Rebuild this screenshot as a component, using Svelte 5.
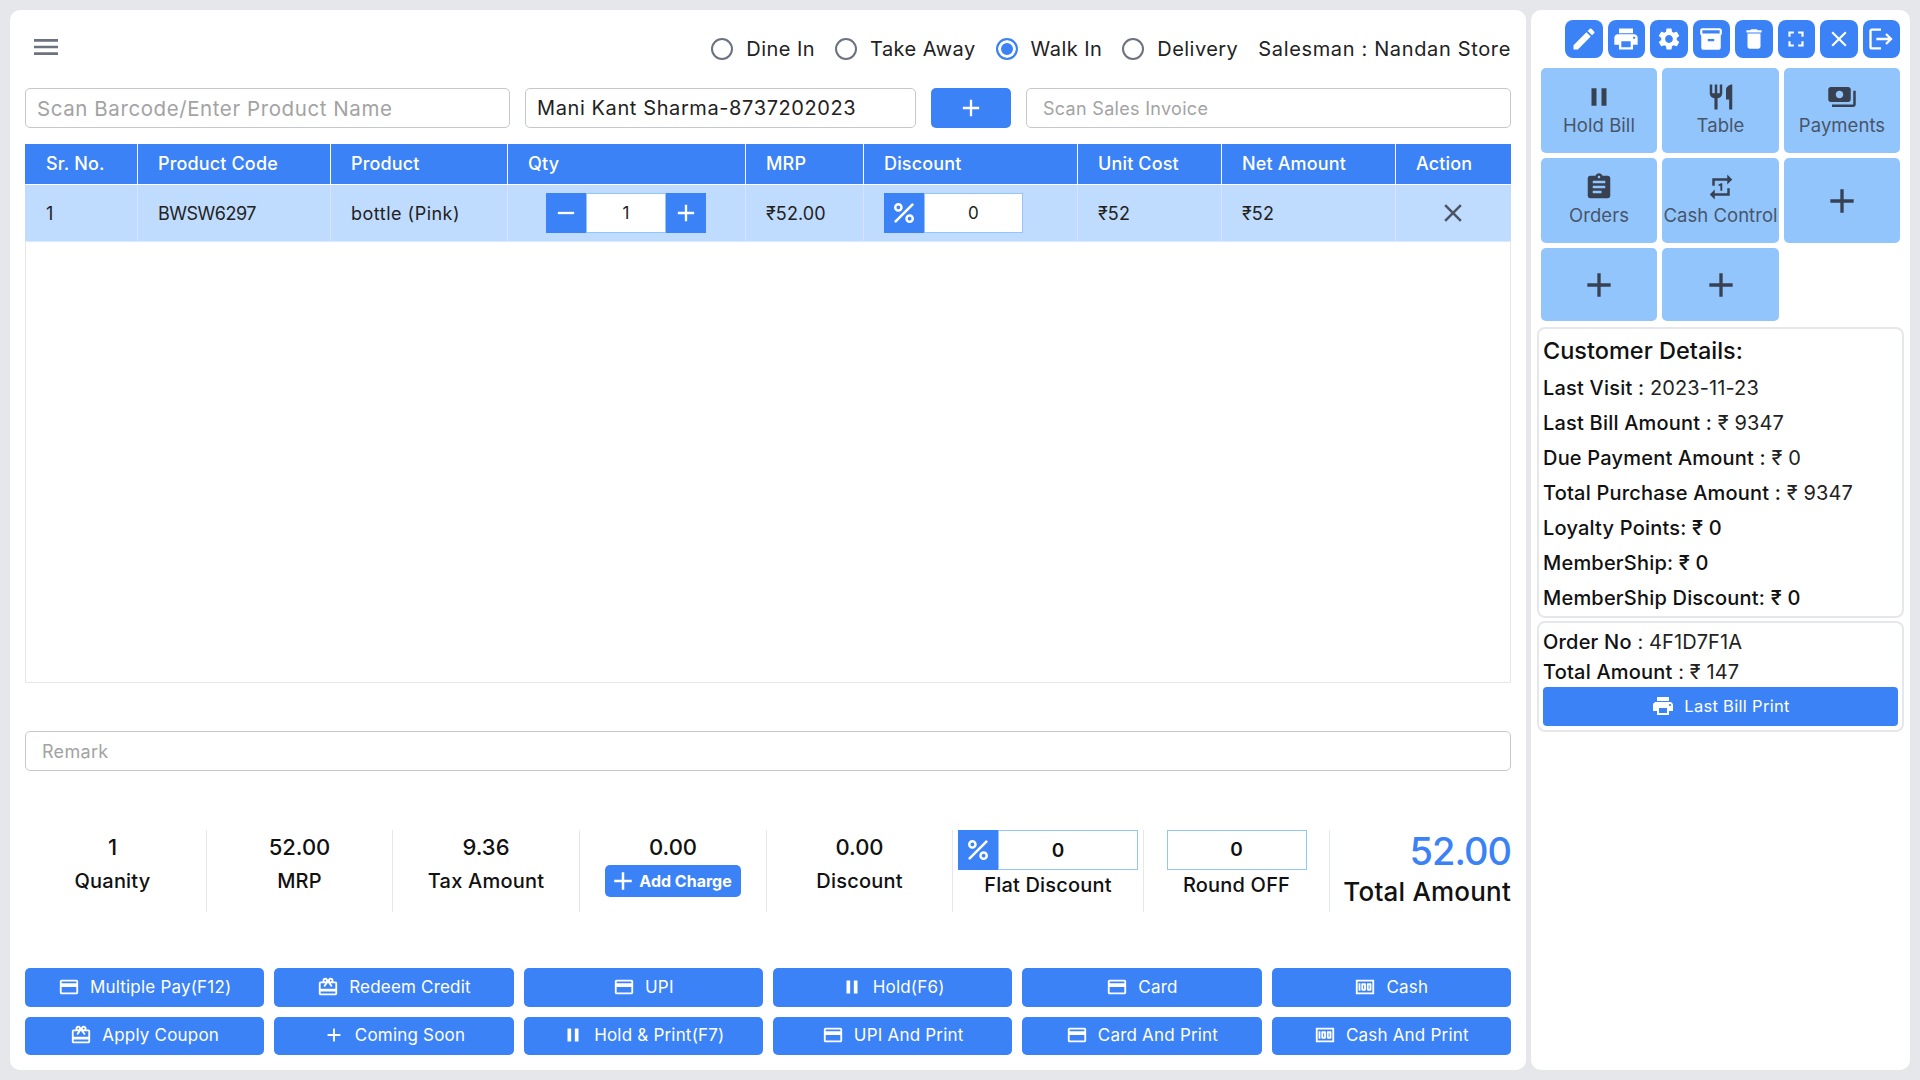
<script>
	// material icon paths
	const icons = {
		edit: 'M3 17.25V21h3.75L17.81 9.94l-3.75-3.75L3 17.25zM20.71 7.04c.39-.39.39-1.02 0-1.41l-2.34-2.34a.9959.9959 0 0 0-1.41 0l-1.83 1.83 3.75 3.75 1.83-1.83z',
		print: 'M19 8H5c-1.66 0-3 1.34-3 3v6h4v4h12v-4h4v-6c0-1.66-1.34-3-3-3zm-3 11H8v-5h8v5zm3-7c-.55 0-1-.45-1-1s.45-1 1-1 1 .45 1 1-.45 1-1 1zm-1-9H6v4h12V3z',
		settings: 'M19.14 12.94c.04-.3.06-.61.06-.94 0-.32-.02-.64-.07-.94l2.03-1.58c.18-.14.23-.41.12-.61l-1.92-3.32c-.12-.22-.37-.29-.59-.22l-2.39.96c-.5-.38-1.03-.7-1.62-.94l-.36-2.54c-.04-.24-.24-.41-.48-.41h-3.84c-.24 0-.43.17-.47.41l-.36 2.54c-.59.24-1.13.57-1.62.94l-2.39-.96c-.22-.08-.47 0-.59.22L2.74 8.87c-.12.21-.08.47.12.61l2.03 1.58c-.05.3-.09.63-.09.94s.02.64.07.94l-2.03 1.58c-.18.14-.23.41-.12.61l1.92 3.32c.12.22.37.29.59.22l2.39-.96c.5.38 1.03.7 1.62.94l.36 2.54c.05.24.24.41.48.41h3.84c.24 0 .44-.17.47-.41l.36-2.54c.59-.24 1.13-.56 1.62-.94l2.39.96c.22.08.47 0 .59-.22l1.92-3.32c.12-.22.07-.47-.12-.61l-2.01-1.58zM12 15.6c-1.98 0-3.6-1.62-3.6-3.6s1.62-3.6 3.6-3.6 3.6 1.62 3.6 3.6-1.62 3.6-3.6 3.6z',
		archive: 'M20 2H4c-1 0-2 .9-2 2v3.01c0 .72.43 1.34 1 1.69V20c0 1.1 1.1 2 2 2h14c.9 0 2-.9 2-2V8.7c.57-.35 1-.97 1-1.69V4c0-1.1-1-2-2-2zm-5 12H9v-2h6v2zm5-7H4V4l16-.02V7z',
		trash: 'M6 19c0 1.1.9 2 2 2h8c1.1 0 2-.9 2-2V7H6v12zM19 4h-3.5l-1-1h-5l-1 1H5v2h14V4z',
		full: 'M7 14H5v5h5v-2H7v-3zm-2-4h2V7h3V5H5v5zm12 7h-3v2h5v-5h-2v3zM14 5v2h3v3h2V5h-5z',
		close: 'M19 6.41 17.59 5 12 10.59 6.41 5 5 6.41 10.59 12 5 17.59 6.41 19 12 13.41 17.59 19 19 17.59 13.41 12z',
		logout: 'M17 7l-1.41 1.41L18.17 11H8v2h10.17l-2.58 2.58L17 17l5-5zM4 5h8V3H4c-1.1 0-2 .9-2 2v14c0 1.1.9 2 2 2h8v-2H4V5z',
		pause: 'M6 19h4V5H6v14zm8-14v14h4V5h-4z',
		table: 'M11 9H9V2H7v7H5V2H3v7c0 2.12 1.66 3.84 3.75 3.97V22h2.5v-9.03C11.34 12.84 13 11.12 13 9V2h-2v7zm5-3v8h2.5v8H21V2c-2.76 0-5 2.24-5 4z',
		payments: 'M19 14V6c0-1.1-.9-2-2-2H3c-1.1 0-2 .9-2 2v8c0 1.1.9 2 2 2h14c1.1 0 2-.9 2-2zm-9-1c-1.66 0-3-1.34-3-3s1.34-3 3-3 3 1.34 3 3-1.34 3-3 3zm13-6v11c0 1.1-.9 2-2 2H4v-2h17V7h2z',
		orders: 'M19 3h-4.18C14.4 1.84 13.3 1 12 1c-1.3 0-2.4.84-2.82 2H5c-1.1 0-2 .9-2 2v14c0 1.1.9 2 2 2h14c1.1 0 2-.9 2-2V5c0-1.1-.9-2-2-2zm-7 0c.55 0 1 .45 1 1s-.45 1-1 1-1-.45-1-1 .45-1 1-1zm2 14H7v-2h7v2zm3-4H7v-2h10v2zm0-4H7V7h10v2z',
		repeat: 'M7 7h10v3l4-4-4-4v3H5v6h2V7zm10 10H7v-3l-4 4 4 4v-3h12v-6h-2v4zm-4-2V9h-1l-2 1v1h1.5v4H13z',
		add: 'M19 13h-6v6h-2v-6H5v-2h6V5h2v6h6v2z',
		remove: 'M19 13H5v-2h14v2z',
		percent: 'M7.5 11C9.43 11 11 9.43 11 7.5S9.43 4 7.5 4 4 5.57 4 7.5 5.57 11 7.5 11zm0-5C8.33 6 9 6.67 9 7.5S8.33 9 7.5 9 6 8.33 6 7.5 6.67 6 7.5 6zM4.0025 18.5832 18.59 3.9955l1.4142 1.4143L5.4167 19.9974zM16.5 13c-1.93 0-3.5 1.57-3.5 3.5s1.57 3.5 3.5 3.5 3.5-1.57 3.5-3.5-1.57-3.5-3.5-3.5zm0 5c-.83 0-1.5-.67-1.5-1.5s.67-1.5 1.5-1.5 1.5.67 1.5 1.5-.67 1.5-1.5 1.5z',
		card: 'M20 4H4c-1.11 0-1.99.89-1.99 2L2 18c0 1.11.89 2 2 2h16c1.11 0 2-.89 2-2V6c0-1.11-.89-2-2-2zm0 14H4v-6h16v6zm0-10H4V6h16v2z',
		gift: 'M20 6h-2.18c.11-.31.18-.65.18-1 0-1.66-1.34-3-3-3-1.05 0-1.96.54-2.5 1.35l-.5.67-.5-.68C10.96 2.54 10.05 2 9 2 7.34 2 6 3.34 6 5c0 .35.07.69.18 1H4c-1.11 0-1.99.89-1.99 2L2 19c0 1.11.89 2 2 2h16c1.11 0 2-.89 2-2V8c0-1.11-.89-2-2-2zm-5-2c.55 0 1 .45 1 1s-.45 1-1 1-1-.45-1-1 .45-1 1-1zM9 4c.55 0 1 .45 1 1s-.45 1-1 1-1-.45-1-1 .45-1 1-1zm11 15H4v-2h16v2zm0-5H4V8h5.08L7 10.83 8.62 12 12 7.4l3.38 4.6L17 10.83 14.92 8H20v6z',
		cash: 'M5 8h2v8H5zm7 0H9c-.55 0-1 .45-1 1v6c0 .55.45 1 1 1h3c.55 0 1-.45 1-1V9c0-.55-.45-1-1-1zm-1 6h-1v-4h1v4zm7-6h-3c-.55 0-1 .45-1 1v6c0 .55.45 1 1 1h3c.55 0 1-.45 1-1V9c0-.55-.45-1-1-1zm-1 6h-1v-4h1v4zM2 4v16h20V4H2zm2 14V6h16v12H4z',
		menu: 'M3 18h18v-2H3v2zm0-5h18v-2H3v2zm0-7v2h18V6H3z'
	};

	const orderTypes = [
		{ label: 'Dine In', on: false },
		{ label: 'Take Away', on: false },
		{ label: 'Walk In', on: true },
		{ label: 'Delivery', on: false }
	];

	const topTools = [
		{ icon: 'edit', size: 28 },
		{ icon: 'print', size: 28 },
		{ icon: 'settings', size: 26 },
		{ icon: 'archive', size: 26 },
		{ icon: 'trash', size: 26 },
		{ icon: 'full', size: 26 },
		{ icon: 'close', size: 26 },
		{ icon: 'logout', size: 28 }
	];

	const tiles = [
		{ icon: 'pause', label: 'Hold Bill' },
		{ icon: 'table', label: 'Table' },
		{ icon: 'payments', label: 'Payments' },
		{ icon: 'orders', label: 'Orders' },
		{ icon: 'repeat', label: 'Cash Control' },
		{ icon: 'add' },
		{ icon: 'add' },
		{ icon: 'add' }
	];

	const actions = [
		{ icon: 'card', label: 'Multiple Pay(F12)' },
		{ icon: 'gift', label: 'Redeem Credit' },
		{ icon: 'card', label: 'UPI' },
		{ icon: 'pause', label: 'Hold(F6)' },
		{ icon: 'card', label: 'Card' },
		{ icon: 'cash', label: 'Cash' },
		{ icon: 'gift', label: 'Apply Coupon' },
		{ icon: 'add', label: 'Coming Soon' },
		{ icon: 'pause', label: 'Hold & Print(F7)' },
		{ icon: 'card', label: 'UPI And Print' },
		{ icon: 'card', label: 'Card And Print' },
		{ icon: 'cash', label: 'Cash And Print' }
	];

	const customer = [
		['Last Visit :', '2023-11-23'],
		['Last Bill Amount :', '₹ 9347'],
		['Due Payment Amount :', '₹ 0'],
		['Total Purchase Amount :', '₹ 9347']
	];
	const points = ['Loyalty Points: ₹ 0', 'MemberShip: ₹ 0', 'MemberShip Discount: ₹ 0'];
</script>

{#snippet icon(name, size)}
	<svg class="ic" viewBox="0 0 24 24" width={size} height={size} fill="currentColor"><path d={icons[name]} /></svg>
{/snippet}

<main class="page">
	<section class="left">
		<div class="topbar">
			<span class="burger">{@render icon('menu', 32)}</span>
			<div class="types">
				{#each orderTypes as t}
					<span class="radio-item">
						<i class="radio" class:on={t.on}></i>
						<span>{t.label}</span>
					</span>
				{/each}
				<span class="salesman">Salesman : Nandan Store</span>
			</div>
		</div>

		<div class="inputs">
			<div class="field f1"><span class="ph">Scan Barcode/Enter Product Name</span></div>
			<div class="field f2"><span>Mani Kant Sharma-8737202023</span></div>
			<button class="add-btn">{@render icon('add', 28)}</button>
			<div class="field f3"><span class="ph small">Scan Sales Invoice</span></div>
		</div>

		<div class="table-wrap">
			<div class="tr head">
				<div>Sr. No.</div>
				<div>Product Code</div>
				<div>Product</div>
				<div>Qty</div>
				<div>MRP</div>
				<div>Discount</div>
				<div>Unit Cost</div>
				<div>Net Amount</div>
				<div>Action</div>
			</div>
			<div class="tr row">
				<div>1</div>
				<div class="code">BWSW6297</div>
				<div class="name">bottle (Pink)</div>
				<div class="qty-cell">
					<span class="sq">{@render icon('remove', 28)}</span>
					<span class="num qty">1</span>
					<span class="sq">{@render icon('add', 28)}</span>
				</div>
				<div>₹52.00</div>
				<div class="disc-cell">
					<span class="sq">{@render icon('percent', 30)}</span>
					<span class="num disc">0</span>
				</div>
				<div>₹52</div>
				<div>₹52</div>
				<div class="act">{@render icon('close', 30)}</div>
			</div>
		</div>

		<div class="field remark"><span class="ph small">Remark</span></div>

		<div class="stats">
			<div class="stat first"><b>1</b><span>Quanity</span></div>
			<div class="stat"><b>52.00</b><span>MRP</span></div>
			<div class="stat"><b>9.36</b><span>Tax Amount</span></div>
			<div class="stat">
				<b>0.00</b>
				<button class="charge">{@render icon('add', 30)}<span>Add Charge</span></button>
			</div>
			<div class="stat"><b>0.00</b><span>Discount</span></div>
			<div class="stat boxed">
				<div class="flat">
					<span class="sq">{@render icon('percent', 30)}</span>
					<span class="num grow">0</span>
				</div>
				<span>Flat Discount</span>
			</div>
			<div class="stat boxed">
				<span class="num round">0</span>
				<span>Round OFF</span>
			</div>
			<div class="stat total">
				<strong>52.00</strong>
				<span>Total Amount</span>
			</div>
		</div>

		<div class="actions">
			{#each actions as a}
				<button class="action">{@render icon(a.icon, 22)}<span>{a.label}</span></button>
			{/each}
		</div>
	</section>

	<aside class="right">
		<div class="tools">
			{#each topTools as t}
				<button class="tool">{@render icon(t.icon, t.size)}</button>
			{/each}
		</div>

		<div class="tiles">
			{#each tiles as t}
				<button class="tile" class:plus={!t.label}>
					{@render icon(t.icon, t.label ? 30 : 40)}
					{#if t.label}<span>{t.label}</span>{/if}
				</button>
			{/each}
		</div>

		<div class="card details">
			<h2>Customer Details:</h2>
			{#each customer as c}
				<p><b>{c[0]}</b> {c[1]}</p>
			{/each}
			{#each points as p}
				<p><b>{p}</b></p>
			{/each}
		</div>

		<div class="card order">
			<p><b>Order No</b> : 4F1D7F1A</p>
			<p><b>Total Amount</b> : ₹ 147</p>
			<button class="last">{@render icon('print', 24)}<span>Last Bill Print</span></button>
		</div>
	</aside>
</main>

<style>
	:global(body) {
		margin: 0;
		background: #e5e7eb;
	}

	.page {
		box-sizing: border-box;
		width: 1920px;
		height: 1080px;
		padding: 10px;
		display: flex;
		gap: 5px;
		font-family: Inter, "Noto Sans", sans-serif;
		color: #111;
	}

	button {
		border: 0;
		margin: 0;
		padding: 0;
		font: inherit;
		color: inherit;
	}

	.ic {
		display: block;
		flex: none;
	}

	.left {
		box-sizing: border-box;
		width: 1516px;
		background: #fff;
		border-radius: 10px;
		padding: 0 15px;
		display: flex;
		flex-direction: column;
	}

	.right {
		box-sizing: border-box;
		width: 379px;
		background: #fff;
		border-radius: 10px;
		padding: 10px 10px 0;
		display: flex;
		flex-direction: column;
	}

	/* top row */
	.topbar {
		height: 78px;
		display: flex;
		align-items: center;
		justify-content: space-between;
		box-sizing: border-box;
	}

	.burger {
		color: #6b7280;
		margin-left: 5px;
		margin-top: -5px;
	}

	.types {
		display: flex;
		align-items: center;
		font-size: 20px;
		letter-spacing: 0.45px;
		color: #222;
	}

	.salesman {
		letter-spacing: 0.65px;
	}

	.radio-item {
		display: flex;
		align-items: center;
		gap: 13px;
		margin-right: 20px;
	}

	.radio {
		box-sizing: border-box;
		width: 22px;
		height: 22px;
		border-radius: 50%;
		border: 2px solid #6b7280;
		background: #fff;
	}

	.radio.on {
		border-color: #3b82f6;
		box-shadow: inset 0 0 0 3px #fff;
		background: #3b82f6;
	}

	/* inputs */
	.inputs {
		display: flex;
		gap: 15px;
		height: 40px;
	}

	.field {
		box-sizing: border-box;
		border: 1.5px solid #c4c7cc;
		border-radius: 5px;
		height: 40px;
		display: flex;
		align-items: center;
		font-size: 20px;
		color: #222;
		padding-left: 11px;
	}

	.ph {
		color: #a3a3a3;
	}

	.ph.small {
		font-size: 18px;
		letter-spacing: 0.3px;
	}

	.f1 {
		width: 485px;
		font-size: 20.5px;
		letter-spacing: 0.58px;
	}

	.f2 {
		width: 391px;
		letter-spacing: 0.6px;
	}

	.f3 {
		width: 485px;
		padding-left: 16px;
	}

	.add-btn {
		width: 80px;
		height: 40px;
		background: #3b82f6;
		color: #fff;
		border-radius: 5px;
		display: flex;
		align-items: center;
		justify-content: center;
	}

	/* table */
	.table-wrap {
		margin-top: 16px;
		height: 539px;
		box-sizing: border-box;
		border: 1px solid #e5e7eb;
		border-top: 0;
	}

	.tr {
		display: grid;
		grid-template-columns: 112px 193px 177px 238px 118px 214px 144px 174px 1fr;
		margin: 0 -1px;
	}

	.tr > div {
		box-sizing: border-box;
		padding-left: 20px;
		display: flex;
		align-items: center;
		border-left: 1px solid #fff;
	}

	.tr > div:first-child {
		border-left: 0;
		padding-left: 21px;
	}

	.head {
		height: 40px;
		background: #3b82f6;
		color: #fff;
		font-size: 18px;
		letter-spacing: 0.15px;
		font-weight: 500;
		border-bottom: 1px solid #fff;
	}

	.head > div {
		padding-bottom: 2px;
	}

	.row {
		height: 57px;
		background: #bfdbfe;
		color: #222;
		font-size: 18px;
		letter-spacing: 0.1px;
		border-bottom: 1px solid #dbeafe;
		box-sizing: border-box;
	}

	.row > div {
		border-left-color: #d5e5fb;
	}

	.row .code {
		letter-spacing: -0.5px;
	}

	.row .name {
		letter-spacing: 0.5px;
	}

	.sq {
		width: 40px;
		height: 40px;
		flex: none;
		background: #3b82f6;
		color: #fff;
		display: flex;
		align-items: center;
		justify-content: center;
	}

	.num {
		box-sizing: border-box;
		height: 40px;
		background: #fff;
		border: 1px solid #93c5fd;
		display: flex;
		align-items: center;
		justify-content: center;
		font-size: 17px;
		color: #222;
	}

	.tr .qty-cell {
		padding-left: 38px;
	}

	.qty {
		width: 80px;
	}

	.disc {
		width: 99px;
	}

	.tr .act {
		padding-left: 42px;
		color: #4b5563;
	}

	/* remark */
	.remark {
		margin-top: 48px;
		width: 100%;
		padding-left: 16px;
	}

	/* totals */
	.stats {
		margin-top: 59px;
		height: 80px;
		display: grid;
		grid-template-columns: 181px 186px 187px 187px 186px 191px 186px 1fr;
	}

	.stat {
		border-left: 1px solid #e5e7eb;
		display: flex;
		flex-direction: column;
		align-items: center;
		font-size: 20px;
		letter-spacing: 0.2px;
		font-weight: 500;
		color: #111;
		gap: 7px;
		padding-top: 4px;
		box-sizing: border-box;
	}

	.stat.first {
		border-left: 0;
		padding-right: 6px;
	}

	.stat b {
		font-size: 22px;
		line-height: 27px;
		font-weight: 500;
		letter-spacing: 0;
	}

	.stat > span {
		line-height: 26px;
	}

	.charge {
		box-sizing: border-box;
		width: 136px;
		height: 32px;
		margin-top: -3px;
		padding-right: 6px;
		background: #3b82f6;
		color: #fff;
		border-radius: 5px;
		display: flex;
		align-items: center;
		justify-content: center;
		gap: 1px;
		font-size: 16px;
		letter-spacing: 0;
		font-weight: 700;
	}

	.boxed {
		padding-top: 0;
		gap: 2px;
	}

	.flat {
		display: flex;
		width: 180px;
	}

	.grow {
		flex: 1;
		font-weight: 600;
		font-size: 19px;
		color: #111;
		padding-right: 20px;
	}

	.round {
		width: 140px;
		font-weight: 600;
		font-size: 19px;
		color: #111;
	}

	.total {
		align-items: flex-end;
		padding-top: 0;
		gap: 0;
	}

	.total strong {
		font-size: 38px;
		line-height: 42px;
		font-weight: 500;
		letter-spacing: -1px;
		color: #3b82f6;
	}

	.total span {
		font-size: 26px;
		letter-spacing: 0.2px;
		line-height: 40px;
		font-weight: 500;
	}

	/* bottom buttons */
	.actions {
		margin-top: 58px;
		display: grid;
		grid-template-columns: repeat(6, 1fr);
		column-gap: 10px;
		row-gap: 10px;
		grid-auto-rows: 38.5px;
	}

	.action {
		background: #3b82f6;
		color: #fff;
		border-radius: 5px;
		display: flex;
		align-items: center;
		justify-content: center;
		gap: 10px;
		font-size: 17px;
		letter-spacing: 0.2px;
		padding-bottom: 1px;
	}

	/* right column */
	.tools {
		display: flex;
		justify-content: flex-end;
		gap: 5px;
	}

	.tool {
		width: 37.5px;
		height: 38px;
		background: #3b82f6;
		color: #fff;
		border-radius: 8px;
		display: flex;
		align-items: center;
		justify-content: center;
	}

	.tiles {
		margin-top: 10px;
		display: grid;
		grid-template-columns: 116px 117px 116px;
		grid-auto-rows: 85px;
		gap: 5px;
	}

	.tile {
		background: #93c5fd;
		color: #475569;
		border-radius: 5px;
		display: flex;
		flex-direction: column;
		align-items: center;
		justify-content: center;
		font-size: 18.5px;
		letter-spacing: 0.05px;
		white-space: nowrap;
		overflow: hidden;
		padding-bottom: 4px;
	}

	.tile:nth-child(n + 7) {
		height: 73px;
	}

	.tile.plus {
		padding-bottom: 0;
	}

	.tile .ic {
		color: #374151;
	}

	.tile span {
		margin-top: 2px;
	}

	.card {
		box-sizing: border-box;
		width: 367px;
		margin-left: -4px;
		border: 2px solid #e5e7eb;
		border-radius: 8px;
		padding: 0 4px;
		color: #111;
	}

	.card p {
		margin: 0;
		font-size: 20px;
		letter-spacing: 0.1px;
		color: #222;
		white-space: nowrap;
	}

	.card b {
		font-weight: 500;
		color: #111;
		letter-spacing: 0.2px;
	}

	.details {
		margin-top: -6px;
		height: 291px;
		padding-top: 5px;
	}

	.details h2 {
		margin: 0 0 4px;
		font-size: 23.5px;
		line-height: 33px;
		font-weight: 500;
		white-space: nowrap;
	}

	.details p {
		line-height: 35px;
	}

	.order {
		margin-top: 3px;
		height: 111px;
		padding-top: 4px;
	}

	.order p {
		line-height: 30px;
	}

	.last {
		width: 100%;
		height: 39px;
		background: #3b82f6;
		color: #fff;
		border-radius: 4px;
		display: flex;
		align-items: center;
		justify-content: center;
		gap: 9px;
		font-size: 16.5px;
		letter-spacing: 0.3px;
		padding-bottom: 2px;
	}
</style>
